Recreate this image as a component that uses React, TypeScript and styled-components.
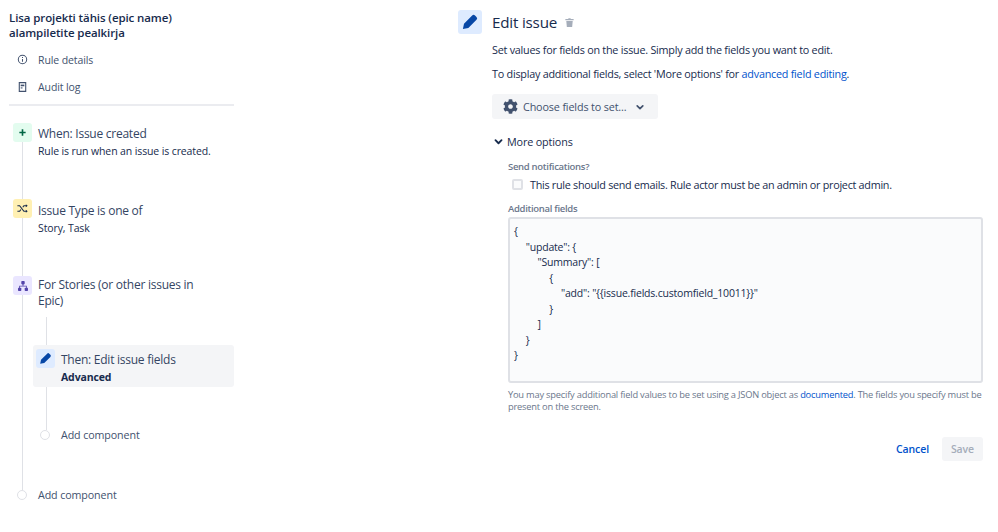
import React from "react";
import styled, { createGlobalStyle } from "styled-components";
import { FaCog } from "react-icons/fa";

const Global = createGlobalStyle`
  html, body { margin: 0; padding: 0; background: #fff; }
  body { font-family: "Open Sans", "Noto Sans", "Liberation Sans", sans-serif; color: #172b4d; }
  * { box-sizing: border-box; }
`;

const Page = styled.div`
  width: 998px; height: 532px; display: flex; overflow: hidden; background: #fff;
`;
const Sidebar = styled.aside`
  width: 234px; margin-right: 224px; padding: 10px 0 0 9px; flex: none;
`;
const RuleTitle = styled.h1`
  margin: 0; font-size: 11.5px; line-height: 15px; font-weight: 600; color: #172b4d; letter-spacing: -0.1px;
`;
const NavList = styled.nav`
  margin-top: 6px; padding-bottom: 4px; border-bottom: 2px solid #ebecf0;
`;
const NavItem = styled.div`
  height: 27px; display: flex; align-items: center; gap: 10px; padding-left: 8px;
  font-size: 10.5px; color: #42526e; letter-spacing: -0.1px;
`;
const Timeline = styled.div`
  position: relative; padding: 17px 0 0 4px;
  &::before { content: ""; position: absolute; left: 13px; top: 36px; width: 1px; height: 348px; background: #dfe1e6; }
`;
const Step = styled.div<{ $h: number }>`
  position: relative; display: flex; gap: 6px; height: ${p => p.$h}px;
`;
const Tile = styled.div<{ $bg: string }>`
  width: 19px; height: 19px; flex: none; border-radius: 3px; background: ${p => p.$bg};
  display: flex; align-items: center; justify-content: center;
`;
const PencilTile = styled(Tile)`
  color: #0747a6;
`;
const StepBody = styled.div<{ $pad: number }>`
  min-width: 0; max-width: 175px; padding-top: ${p => p.$pad}px;
`;
const StepTitle = styled.div`
  font-size: 12px; line-height: 16px; color: #344563; letter-spacing: -0.25px;
`;
const StepSub = styled.div<{ $bold?: boolean }>`
  margin-top: 2px; font-size: 10.5px; line-height: 15px; color: #172b4d; letter-spacing: -0.12px;
  font-weight: ${p => p.$bold ? 700 : 400};
`;
const Branch = styled.div`
  position: relative; padding: 0 0 0 20px;
  &::before { content: ""; position: absolute; left: 33px; top: -28px; width: 1px; height: 113px; background: #dfe1e6; }
`;
const ActiveCard = styled.div`
  position: relative; height: 42px; padding: 4px 0 0 3px; display: flex; gap: 6px; background: #f4f5f7; border-radius: 3px;
`;
const AddRow = styled.div<{ $top: number; $left: number }>`
  position: relative; display: flex; align-items: center; gap: 11px; height: 16px; margin-top: ${p => p.$top}px; margin-left: ${p => p.$left}px;
  font-size: 10.7px; color: #42526e; letter-spacing: -0.1px;
`;
const Dot = styled.span`
  width: 10px; height: 10px; flex: none; border-radius: 50%; background: #fff; border: 1.5px solid #dfe1e6;
`;

const Main = styled.main`
  width: 525px; flex: none; padding-top: 10px;
`;
const Header = styled.header`
  display: flex; align-items: center; height: 24px;
`;
const HeaderTile = styled.div`
  width: 24px; height: 24px; flex: none; border-radius: 3px; background: #deebff; color: #0747a6;
  display: flex; align-items: center; justify-content: center; margin-right: 10px;
`;
const Heading = styled.h2`
  margin: 0 7px 0 0; font-size: 15.2px; line-height: 24px; font-weight: 500; color: #172b4d; letter-spacing: -0.2px;
`;
const Content = styled.div`
  padding-left: 34px;
`;
const Para = styled.p<{ $top: number }>`
  margin: ${p => p.$top}px 0 0; font-size: 10.8px; line-height: 16px; color: #172b4d; letter-spacing: -0.24px; white-space: nowrap;
`;
const A = styled.a`
  color: #0052cc; text-decoration: none;
`;
const ChooseButton = styled.button`
  margin-top: 12px; width: 166px; height: 25px; border: 0; border-radius: 3px; background: #f4f5f7; color: #42526e;
  display: flex; align-items: center; padding: 0 0 0 11px; font: inherit; font-size: 10.8px; letter-spacing: -0.15px; font-weight: 500;
`;
const ButtonText = styled.span`
  margin: 0 8px 0 5px;
`;
const MoreToggle = styled.div`
  margin-top: 14px; height: 16px; display: flex; align-items: center; gap: 2px; font-size: 10.8px; font-weight: 500; color: #172b4d; letter-spacing: -0.15px;
`;
const Fields = styled.div`
  padding-left: 16px;
`;
const Label = styled.div<{ $top: number }>`
  margin-top: ${p => p.$top}px; font-size: 9.5px; line-height: 12px; font-weight: 600; color: #6b778c; letter-spacing: -0.3px;
`;
const CheckRow = styled.label`
  margin-top: 4px; height: 14px; display: flex; align-items: center; gap: 7px; padding-left: 4px;
  font-size: 10.8px; color: #172b4d; letter-spacing: -0.28px; white-space: nowrap;
`;
const Box = styled.span`
  width: 11px; height: 11px; flex: none; border: 2px solid #dfe1e6; border-radius: 2px; background: #fafbfc;
`;
const CodeBox = styled.div`
  margin: 2px 0 0; width: 475px; height: 166px; padding: 5px 4px; border: 2px solid #dfe1e6; border-radius: 3px; background: #fafbfc;
  font-size: 10.5px; line-height: 15.5px; color: #172b4d; letter-spacing: -0.2px; overflow: hidden;
`;
const CodeLine = styled.div<{ $indent: number }>`
  padding-left: ${p => p.$indent * 11.75}px; white-space: pre;
`;
const Help = styled.p`
  margin: 6px 0 0; width: 480px; font-size: 9.3px; line-height: 12px; color: #6b778c; letter-spacing: -0.21px;
`;
const Actions = styled.div`
  margin-top: 24px; width: 475px; display: flex; justify-content: flex-end; align-items: center; gap: 13px;
`;
const Cancel = styled.button`
  border: 0; background: none; padding: 0; font: inherit; font-size: 10.5px; font-weight: 600; color: #0052cc; letter-spacing: -0.1px;
`;
const Save = styled.button`
  width: 41px; height: 24px; border: 0; border-radius: 3px; background: #f4f5f7; color: #a5adba; padding: 0;
  font: inherit; font-size: 10.5px; font-weight: 600; letter-spacing: -0.1px;
`;

const Pencil = ({ s }: { s: number }) => (
  <svg width={s} height={s} viewBox="0 0 24 24" fill="currentColor">
    <path d="M3.5 20.5 4.8 14l9.8-9.8a2.4 2.4 0 0 1 3.4 0L19.8 6a2.4 2.4 0 0 1 0 3.4L10 19.2z" />
  </svg>
);
const Chevron = ({ s }: { s: number }) => (
  <svg width={s} height={s} viewBox="0 0 12 12" fill="none" stroke="currentColor" strokeWidth="1.7" strokeLinecap="round" strokeLinejoin="round">
    <path d="M3.2 4.8 6 7.6l2.8-2.8" />
  </svg>
);
const Trash = () => (
  <svg width="11" height="11" viewBox="0 0 12 12" fill="#a5adba">
    <path d="M1.5 2.2h3l.5-.9h2l.5.9h3v1.3h-9zM2.5 4.3h7L8.9 11H3.1z" />
  </svg>
);
const Info = () => (
  <svg width="11" height="11" viewBox="0 0 12 12" fill="none" stroke="#42526e" strokeWidth="1.1">
    <circle cx="6" cy="6" r="4.6" />
    <path d="M6 5.4v3M6 3.4v1" />
  </svg>
);
const Doc = () => (
  <svg width="11" height="12" viewBox="0 0 12 12" fill="none" stroke="#42526e" strokeWidth="1.2">
    <path d="M2.5 1.2h7v9.6h-7z" />
    <path d="M4 3.4h4v1.8H4z" fill="#42526e" stroke="none" />
    <path d="M4 7h2" />
  </svg>
);
const Plus = () => (
  <svg width="9" height="9" viewBox="0 0 10 10" stroke="#006644" strokeWidth="1.8">
    <path d="M5 1.5v7M1.5 5h7" />
  </svg>
);
const Shuffle = () => (
  <svg width="13" height="13" viewBox="0 0 14 14" fill="none" stroke="#172b4d" strokeWidth="1.2">
    <path d="M1.5 4h2.4l4.6 6h3M1.5 10h2.4l1.4-1.9M7.3 5.7 8.5 4h3" />
    <path d="M10.6 2.4 12.6 4l-2 1.6zM10.6 8.4l2 1.6-2 1.6z" fill="#172b4d" stroke="none" />
  </svg>
);
const Tree = () => (
  <svg width="12" height="12" viewBox="0 0 12 12" fill="#5243aa">
    <rect x="4.3" y="1" width="3.4" height="3.4" rx=".8" />
    <rect x="1" y="7.8" width="3.3" height="3.3" rx=".8" />
    <rect x="7.7" y="7.8" width="3.3" height="3.3" rx=".8" />
    <path d="M5.6 4h.8v1.8h3.4V8H9V6.6H3V8h-.8V5.8h3.4z" />
  </svg>
);

const code: [number, string][] = [
  [0, "{"],
  [1, '"update": {'],
  [2, '"Summary": ['],
  [3, "{"],
  [4, '"add": "{{issue.fields.customfield_10011}}"'],
  [3, "}"],
  [2, "]"],
  [1, "}"],
  [0, "}"],
];

export default function App() {
  return (
    <Page>
      <Global />
      <Sidebar>
        <RuleTitle>Lisa projekti tähis (epic name)<br />alampiletite pealkirja</RuleTitle>
        <NavList>
          <NavItem><Info />Rule details</NavItem>
          <NavItem><Doc />Audit log</NavItem>
        </NavList>
        <Timeline>
          <Step $h={76}>
            <Tile $bg="#e3fcef"><Plus /></Tile>
            <StepBody $pad={3}>
              <StepTitle>When: Issue created</StepTitle>
              <StepSub>Rule is run when an issue is created.</StepSub>
            </StepBody>
          </Step>
          <Step $h={77}>
            <Tile $bg="#fff0b3"><Shuffle /></Tile>
            <StepBody $pad={4}>
              <StepTitle>Issue Type is one of</StepTitle>
              <StepSub>Story, Task</StepSub>
            </StepBody>
          </Step>
          <Step $h={69}>
            <Tile $bg="#eae6ff"><Tree /></Tile>
            <StepBody $pad={1}>
              <StepTitle>For Stories (or other issues in Epic)</StepTitle>
            </StepBody>
          </Step>
          <Branch>
            <ActiveCard>
              <PencilTile $bg="#deebff"><Pencil s={15} /></PencilTile>
              <StepBody $pad={3}>
                <StepTitle>Then: Edit issue fields</StepTitle>
                <StepSub $bold>Advanced</StepSub>
              </StepBody>
            </ActiveCard>
            <AddRow $top={40} $left={7}><Dot />Add component</AddRow>
          </Branch>
          <AddRow $top={44} $left={4}><Dot />Add component</AddRow>
        </Timeline>
      </Sidebar>
      <Main>
        <Header>
          <HeaderTile><Pencil s={20} /></HeaderTile>
          <Heading>Edit issue</Heading>
          <Trash />
        </Header>
        <Content>
          <Para $top={8}>Set values for fields on the issue. Simply add the fields you want to edit.</Para>
          <Para $top={8}>To display additional fields, select 'More options' for <A>advanced field editing</A>.</Para>
          <ChooseButton><FaCog size={15} color="#42526e" /><ButtonText>Choose fields to set...</ButtonText><Chevron s={12} /></ChooseButton>
          <MoreToggle><Chevron s={13} />More options</MoreToggle>
          <Fields>
            <Label $top={12}>Send notifications?</Label>
            <CheckRow><Box />This rule should send emails. Rule actor must be an admin or project admin.</CheckRow>
            <Label $top={12}>Additional fields</Label>
            <CodeBox>
              {code.map(([indent, text], i) => <CodeLine key={i} $indent={indent}>{text}</CodeLine>)}
            </CodeBox>
            <Help>You may specify additional field values to be set using a JSON object as <A>documented</A>. The fields you specify must be present on the screen.</Help>
            <Actions>
              <Cancel>Cancel</Cancel>
              <Save>Save</Save>
            </Actions>
          </Fields>
        </Content>
      </Main>
    </Page>
  );
}
